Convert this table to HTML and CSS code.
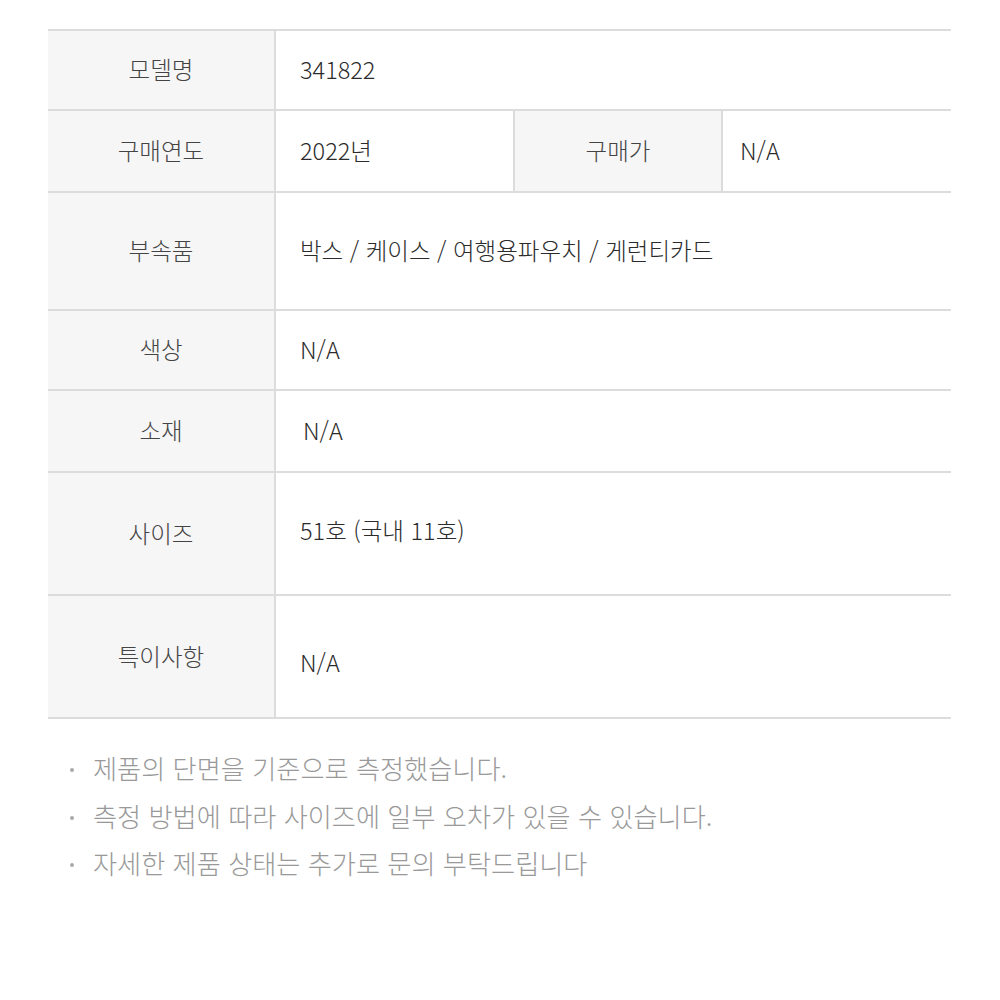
FILE: index.html
```html
<!DOCTYPE html>
<html lang="ko">
<head>
<meta charset="utf-8">
<link rel="stylesheet" href="styles.css">
</head>
<body>
<div class="wrap">
  <table class="spec">
    <colgroup>
      <col class="c1"><col class="c2"><col class="c3"><col class="c4">
    </colgroup>
    <tr class="r80"><th>모델명</th><td colspan="3">341822</td></tr>
    <tr class="r82"><th>구매연도</th><td>2022년</td><th class="mid">구매가</th><td class="tight">N/A</td></tr>
    <tr class="r118"><th>부속품</th><td colspan="3">박스 / 케이스 / 여행용파우치 / 게런티카드</td></tr>
    <tr class="r80"><th>색상</th><td colspan="3">N/A</td></tr>
    <tr class="r82"><th>소재</th><td colspan="3" class="shift">N/A</td></tr>
    <tr class="r123"><th>사이즈</th><td colspan="3" class="up">51호 (국내 11호)</td></tr>
    <tr class="r123"><th>특이사항</th><td colspan="3" class="down">N/A</td></tr>
  </table>
  <ul class="notes">
    <li>제품의 단면을 기준으로 측정했습니다.</li>
    <li>측정 방법에 따라 사이즈에 일부 오차가 있을 수 있습니다.</li>
    <li>자세한 제품 상태는 추가로 문의 부탁드립니다</li>
  </ul>
</div>
</body>
</html>
```

FILE: styles.css
```css
html, body {
  margin: 0;
  padding: 0;
  background: #fff;
}
body {
  font-family: "Noto Sans CJK KR", "Noto Sans", sans-serif;
  color: #333;
}
.wrap {
  width: 903px;
  margin: 29px 0 0 48px;
}
.spec {
  width: 903px;
  border-collapse: collapse;
  table-layout: fixed;
  border-top: 2px solid #dcdcdc;
}
.c1 { width: 227px; }
.c2 { width: 239px; }
.c3 { width: 208px; }
.c4 { width: 229px; }
.spec th, .spec td {
  border-bottom: 2px solid #dcdcdc;
  font-size: 23.5px;
  font-weight: 300;
  line-height: 32px;
  padding: 0 0 2px 0;
  vertical-align: middle;
}
.spec th {
  background: #f6f6f6;
  color: #444;
  text-align: center;
  border-right: 2px solid #dcdcdc;
}
.spec th.mid {
  border-left: 2px solid #dcdcdc;
}
.spec td {
  text-align: left;
  padding-left: 24px;
  color: #2b2b2b;
}
.spec td.tight { padding-left: 17px; }
.spec td.shift { padding-left: 27px; }
.spec td.up { padding-bottom: 8px; }
.spec td.down { padding-top: 12px; }
.r80 { height: 80px; }
.r82 { height: 82px; }
.r118 { height: 118px; }
.r123 { height: 123px; }
.notes {
  list-style: none;
  margin: 26px 0 0 0;
  padding: 0 0 0 22px;
}
.notes li {
  position: relative;
  padding-left: 23px;
  font-size: 26.2px;
  font-weight: 300;
  line-height: 47.5px;
  color: #999;
}
.notes li::before {
  content: "";
  position: absolute;
  left: 0;
  top: 23px;
  width: 4px;
  height: 4px;
  border-radius: 50%;
  background: #aaa;
}
```
